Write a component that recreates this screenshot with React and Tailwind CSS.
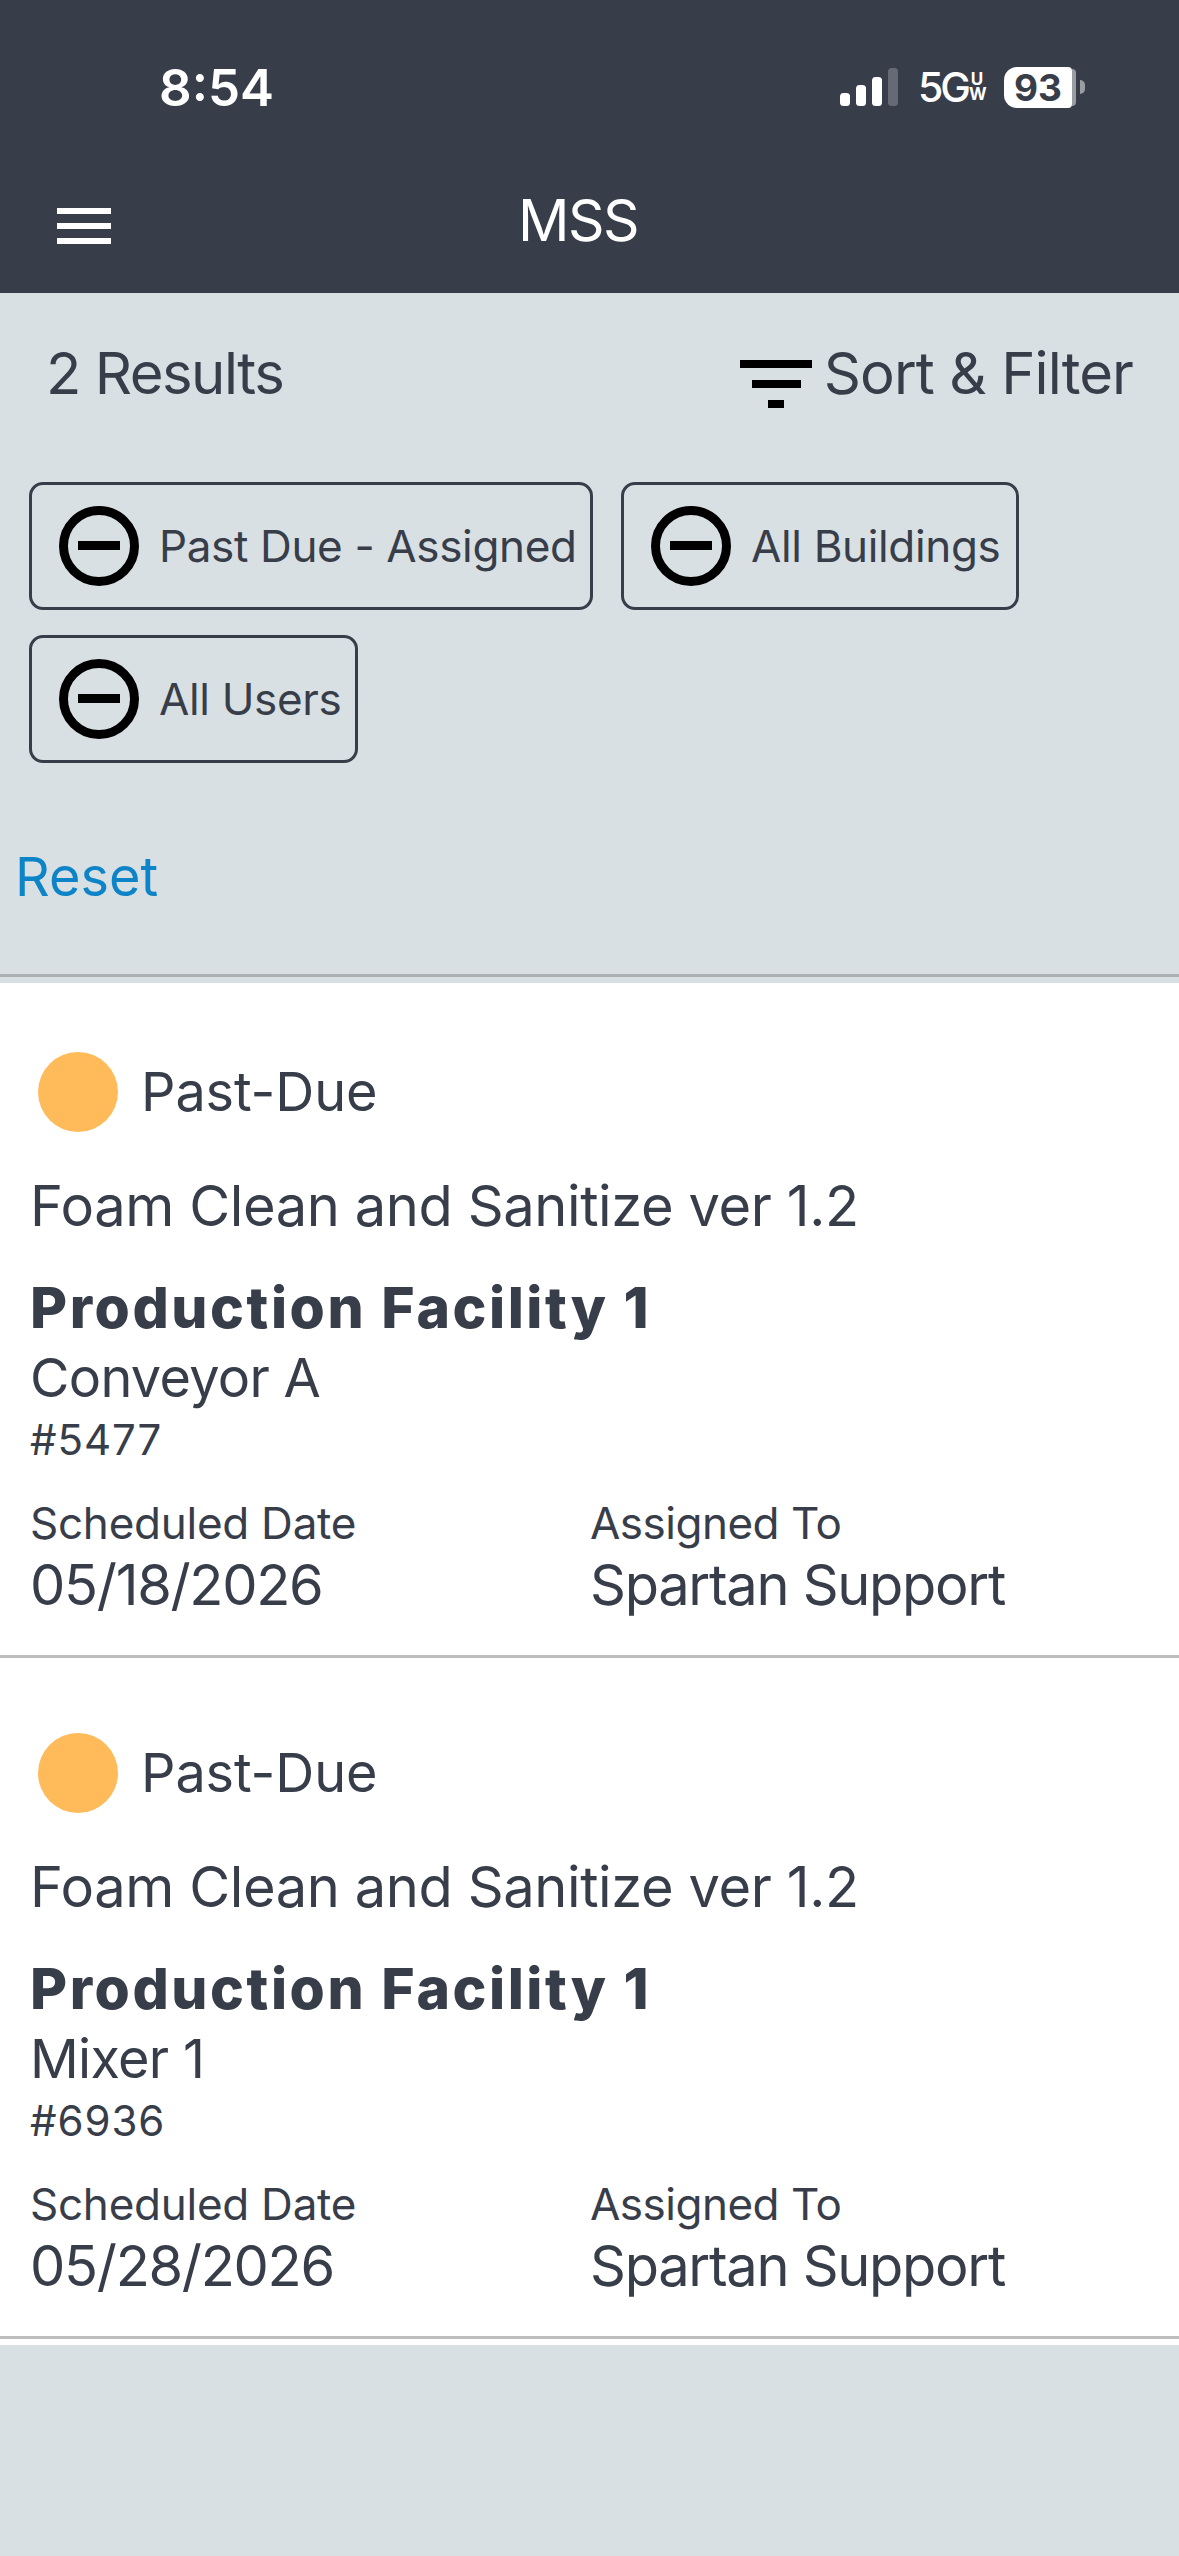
function MinusCircle() {
  return (
    <svg width="80" height="80" viewBox="0 0 80 80" className="shrink-0">
      <circle cx="40" cy="40" r="35.5" fill="none" stroke="#000" strokeWidth="9" />
      <rect x="19" y="35" width="42" height="9" fill="#000" />
    </svg>
  );
}

function Chip({ label, className }) {
  return (
    <div className={`flex h-[128px] items-center rounded-[14px] border-[3px] border-[#383d4a] pl-[27px] ${className}`}>
      <MinusCircle />
      <span className="ml-[20px] whitespace-nowrap text-[44px] tracking-[-0.35px] text-[#383d4a]">{label}</span>
    </div>
  );
}

function Job({ location, code, date }) {
  return (
    <div className="h-[681px] shrink-0 bg-white pb-[6px]">
      <div className="h-[675px] border-b-[3px] border-[#bdbdbd] pl-[30px] pt-[68px] text-[#383d4a]">
        <div className="flex items-center pl-[8px]">
          <div className="h-[80px] w-[80px] rounded-full bg-[#ffbb59]" />
          <span className="ml-[23px] text-[54px] tracking-[-0.1px]">Past-Due</span>
        </div>
        <div className="mt-[32px] h-[84px] text-[56px] leading-[84px] tracking-[-0.4px]">Foam Clean and Sanitize ver 1.2</div>
        <div className="mt-[26px] h-[68px] text-[57px] font-extrabold leading-[68px] tracking-[2.55px]">Production Facility 1</div>
        <div className="mt-[2px] h-[68px] text-[54px] leading-[68px] tracking-[-0.7px]">{location}</div>
        <div className="mt-[3px] h-[50px] text-[42px] leading-[50px] tracking-[0.9px]">{code}</div>
        <div className="mt-[33px] flex">
          <div className="w-[560px]">
            <div className="h-[50px] text-[44px] leading-[50px] tracking-[-0.25px]">Scheduled Date</div>
            <div className="mt-[1px] h-[72px] text-[56px] leading-[72px] tracking-[-1.3px]">{date}</div>
          </div>
          <div>
            <div className="h-[50px] text-[44px] leading-[50px] tracking-[-0.5px]">Assigned To</div>
            <div className="mt-[1px] h-[72px] text-[56px] leading-[72px] tracking-[-1.3px]">Spartan Support</div>
          </div>
        </div>
      </div>
    </div>
  );
}

export default function App() {
  return (
    <div className="flex h-[2556px] w-[1179px] flex-col overflow-hidden bg-[#d9e0e3] font-['Inter',sans-serif]">
      <header className="h-[293px] shrink-0 bg-[#383d4a] text-white">
        <div className="flex h-[176px] items-center pb-[2px]">
          <span className="ml-[159px] w-[681px] text-[51px] font-semibold leading-none">8:54</span>
          <svg width="58" height="38" viewBox="0 0 58 38" className="shrink-0">
            <rect x="0" y="25" width="10" height="13" rx="3.5" fill="#fff" />
            <rect x="16" y="17" width="10" height="21" rx="3.5" fill="#fff" />
            <rect x="32" y="9" width="10" height="29" rx="3.5" fill="#fff" />
            <rect x="48" y="0" width="10" height="38" rx="3.5" fill="#666a75" />
          </svg>
          <span className="ml-[20px] w-[48px] text-[41px] font-medium leading-none tracking-[-3px]">5G</span>
          <span className="ml-[3px] flex w-[16px] flex-col text-center text-[17px] font-bold leading-[15px]">
            <span>U</span>
            <span>W</span>
          </span>
          <div className="ml-[19px] flex h-[41px] w-[68px] items-center justify-center rounded-l-[13px] rounded-r-[4px] bg-white text-[37px] font-bold leading-none text-[#383d4a]">
            93
          </div>
          <div className="h-[37px] w-[4px] rounded-r-[6px] bg-[#9a9ca3]" />
          <div className="ml-[4px] h-[14px] w-[5px] rounded-r-full bg-[#9a9ca3]" />
        </div>
        <div className="mt-[14px] flex h-[60px] items-center">
          <div className="ml-[57px] mt-[12px] flex h-[36px] w-[54px] flex-col justify-between">
            <div className="h-[6px] bg-white" />
            <div className="h-[6px] bg-white" />
            <div className="h-[6px] bg-white" />
          </div>
          <span className="ml-[407px] text-[57px] leading-none tracking-[-1.5px]">MSS</span>
        </div>
      </header>

      <section className="mb-[6px] h-[684px] shrink-0 border-b-[3px] border-[#abb0b2] text-[#383d4a]">
        <div className="flex h-[116px] items-center justify-between px-[46px] pt-[45px]">
          <span className="text-[58px] tracking-[-1.5px]">2 Results</span>
          <div className="flex items-center">
            <svg width="72" height="48" viewBox="0 0 72 48" className="mr-[12px] mt-[20px]">
              <rect x="0" y="0" width="72" height="8" fill="#000" />
              <rect x="12" y="20" width="49" height="8" fill="#000" />
              <rect x="28" y="40" width="16" height="8" fill="#000" />
            </svg>
            <span className="text-[58px] tracking-[-0.9px]">Sort &amp; Filter</span>
          </div>
        </div>
        <div className="mt-[73px] flex flex-wrap gap-x-[28px] gap-y-[25px] pl-[29px]">
          <Chip label="Past Due - Assigned" className="w-[564px]" />
          <Chip label="All Buildings" className="w-[398px]" />
          <Chip label="All Users" className="w-[329px]" />
        </div>
        <div className="ml-[15px] mt-[84px] text-[54px] leading-[60px] text-[#0d84c8]">Reset</div>
      </section>

      <Job location="Conveyor A" code="#5477" date="05/18/2026" />
      <Job location="Mixer 1" code="#6936" date="05/28/2026" />
    </div>
  );
}
